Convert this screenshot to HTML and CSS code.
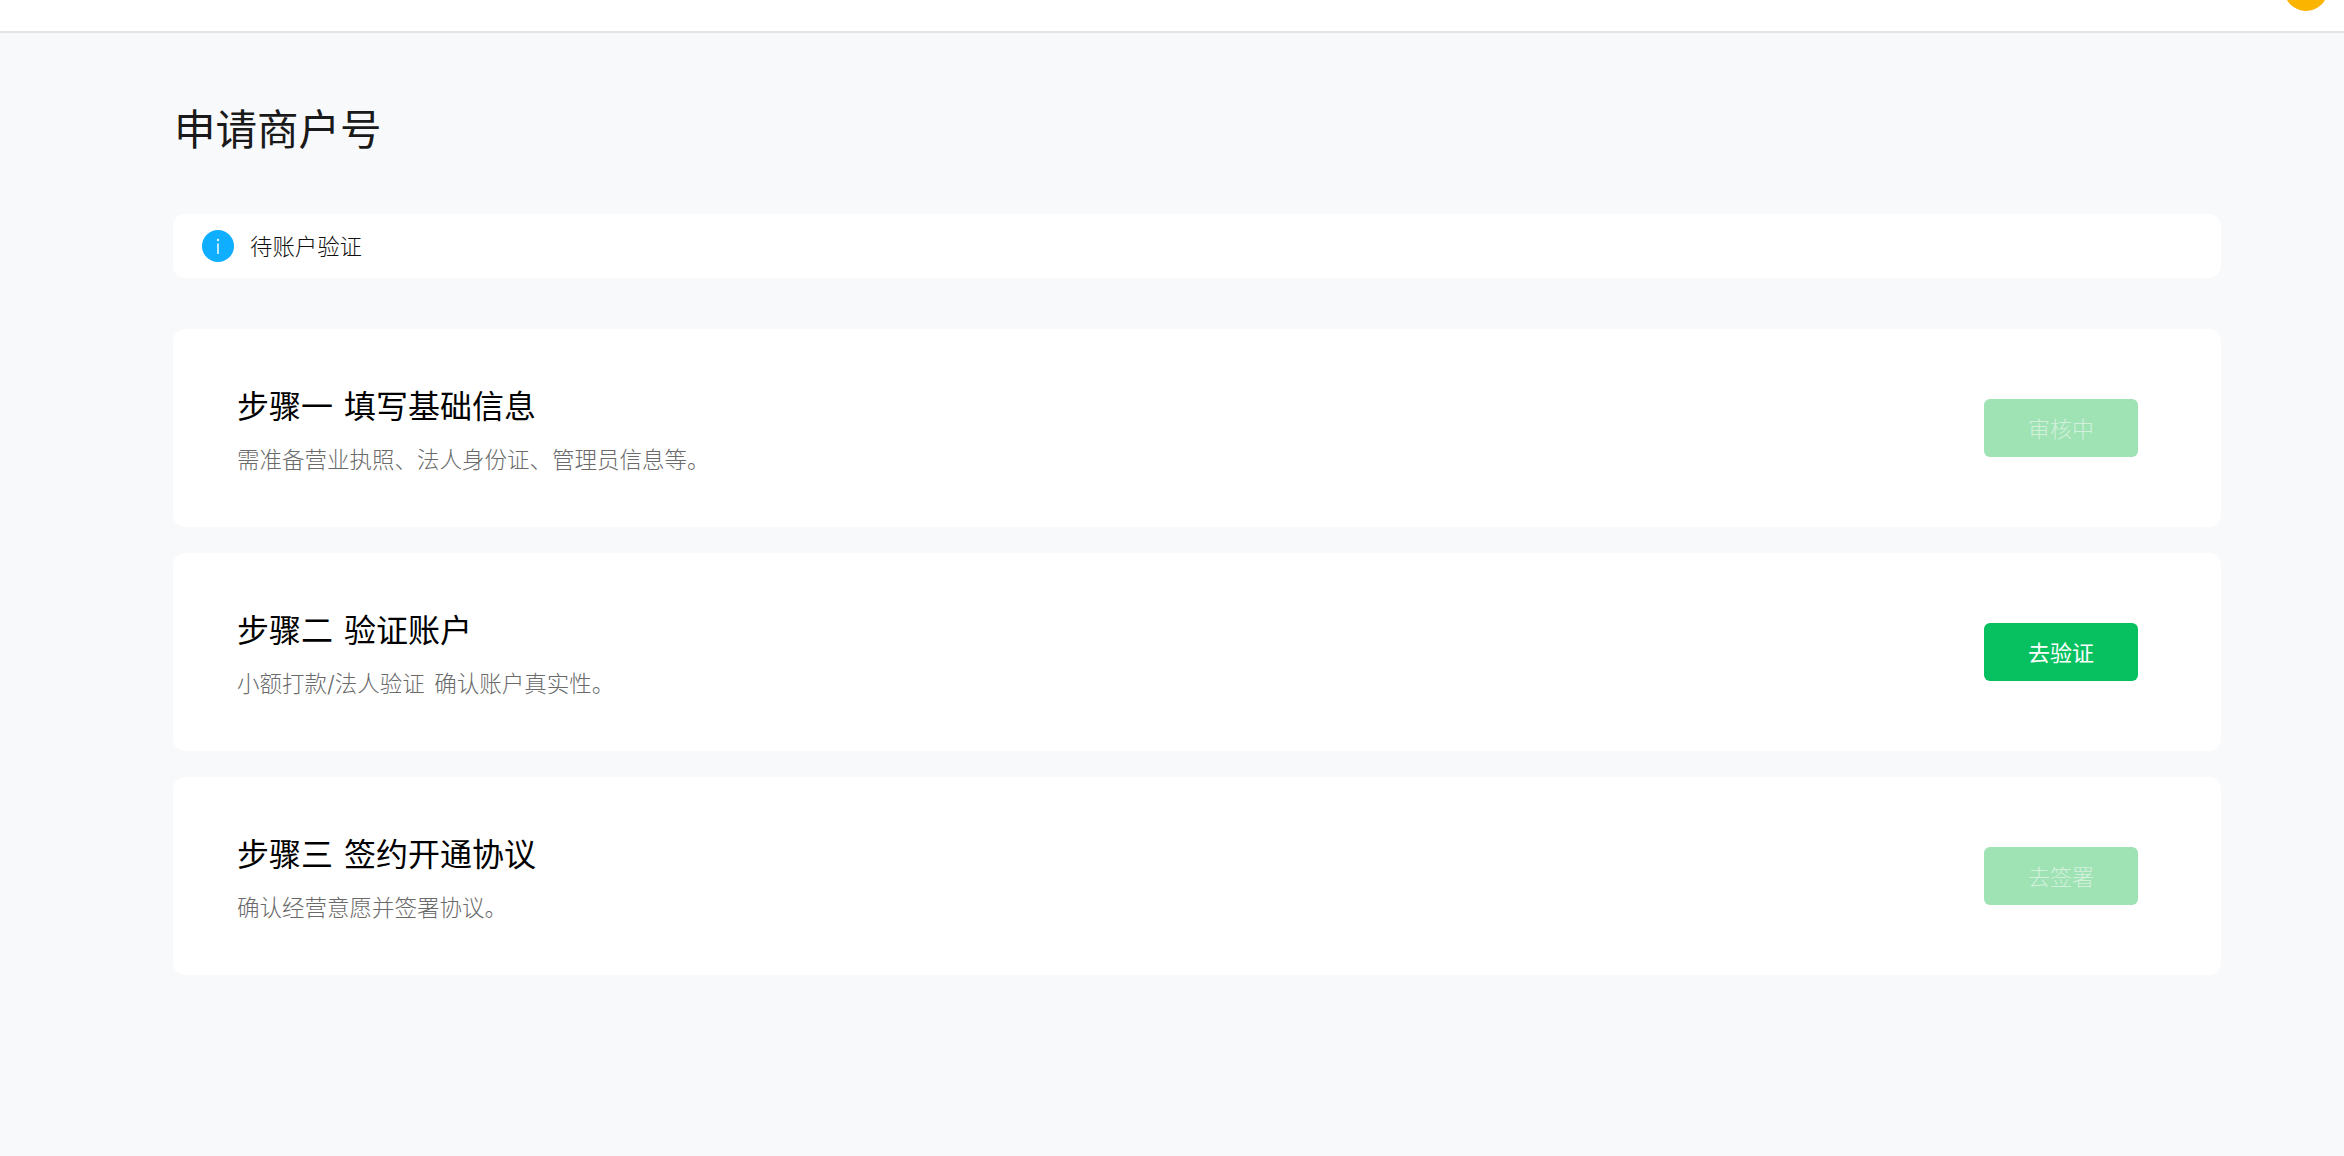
FILE: index.html
```html
<!DOCTYPE html>
<html lang="zh-CN">
    <head>
        <meta charset='utf-8'/>
        <title>申请商户号</title>
        <link rel="stylesheet" href="styles.css">
    </head>
    <body>
        <div class="topbar"><div class="avatar"></div></div>
        <div class="main">
            <h1 class="page_title">申请商户号</h1>
            <div class="notice">
                <svg class="notice_icon" viewBox="0 0 32 32">
                    <circle cx="16" cy="16" r="16" fill="#10aeff"/>
                    <rect x="15.2" y="13.5" width="1.6" height="10.5" fill="#fff" opacity="0.9"/>
                    <circle cx="16" cy="10" r="1.2" fill="#fff" opacity="0.9"/>
                </svg>
                <span class="notice_text">待账户验证</span>
            </div>
            <div class="step">
                <div class="step_info">
                    <h2>步骤一 填写基础信息</h2>
                    <p>需准备营业执照、法人身份证、管理员信息等。</p>
                </div>
                <button class="btn btn_off">审核中</button>
            </div>
            <div class="step">
                <div class="step_info">
                    <h2>步骤二 验证账户</h2>
                    <p>小额打款/法人验证 确认账户真实性。</p>
                </div>
                <button class="btn">去验证</button>
            </div>
            <div class="step">
                <div class="step_info">
                    <h2>步骤三 签约开通协议</h2>
                    <p>确认经营意愿并签署协议。</p>
                </div>
                <button class="btn btn_off">去签署</button>
            </div>
        </div>
    </body>
</html>
```
FILE: styles.css
```css
html, body {height: 100%;}
body {margin: 0; background-color: #f8f9fb; font-family: "Inter", "Noto Sans CJK SC", sans-serif; font-weight: 300; overflow: hidden;}
.topbar {position: relative; height: 31px; background-color: #fff; border-bottom: 2px solid #e3e4e7; overflow: hidden;}
.avatar {position: absolute; top: -33px; right: 16px; width: 44px; height: 44px; border-radius: 50%; background-color: #fbb500;}
.main {width: 2048px; margin-left: 173px;}
.page_title {margin: 0; padding: 68px 0 0 1px; height: 60px; font-size: 41.5px; line-height: 58px; font-weight: 400; color: #1a1a1a;}
.notice {display: flex; align-items: center; height: 64px; margin-top: 53px; margin-bottom: 51px; padding-left: 29px; background-color: #fff; border-radius: 12px; font-size: 22.4px; color: #111;}
.notice_icon {width: 32px; height: 32px; margin-right: 16px;}
.notice_text {margin-top: -2px;}
.step {display: flex; align-items: center; justify-content: space-between; height: 198px; margin-bottom: 26px; padding: 0 83px 0 64px; box-sizing: border-box; background-color: #fff; border-radius: 12px;}
.step_info {padding-top: 3px;}
.step h2 {margin: 0; font-size: 32px; line-height: 46px; font-weight: 400; word-spacing: 2px; color: #000;}
.step p {margin: 14px 0 0 0; font-size: 22.5px; line-height: 32px; word-spacing: 3px; color: #6a6a6a;}
.btn {width: 154px; height: 58px; padding: 0 0 3px 0; border: none; border-radius: 6px; background-color: #07c160; color: #fff; font-family: inherit; font-weight: 400; font-size: 22px;}
.btn_off {background-color: #9fe3b4; color: #d2f0dc; font-weight: 300;}
```
